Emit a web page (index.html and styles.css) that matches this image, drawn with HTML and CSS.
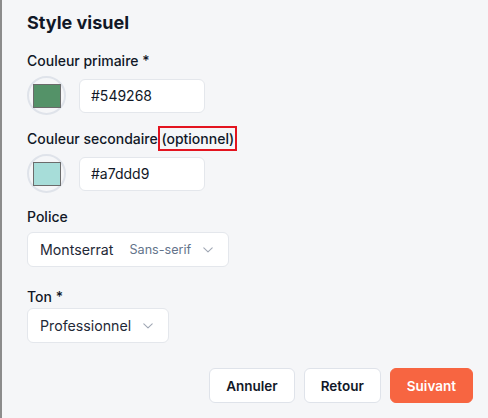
FILE: index.html
```html
<!DOCTYPE html>
<html lang="fr">
<head>
    <meta charset="UTF-8">
    <meta name="viewport" content="width=device-width, initial-scale=1.0">
    <title>Style visuel</title>
    <link rel="stylesheet" href="styles.css">
</head>
<body>
    <div class="panel">
        <h2 class="panel-title">Style visuel</h2>

        <div class="field">
            <label class="field-label">Couleur primaire *</label>
            <div class="color-row">
                <div class="swatch"><span class="swatch-fill" style="background: #549268"></span></div>
                <input class="text-input" type="text" value="#549268">
            </div>
        </div>

        <div class="field">
            <label class="field-label">Couleur secondaire <span class="optional">(optionnel)</span></label>
            <div class="color-row">
                <div class="swatch"><span class="swatch-fill" style="background: #a7ddd9"></span></div>
                <input class="text-input" type="text" value="#a7ddd9">
            </div>
        </div>

        <div class="field field-wide">
            <label class="field-label">Police</label>
            <div class="select">
                <span class="select-value">Montserrat</span>
                <span class="select-hint">Sans-serif</span>
                <svg class="chevron" width="10" height="6" viewBox="0 0 10 6"><path d="M0.8 0.8L5 4.8 9.2 0.8" fill="none" stroke="#a0a7b4" stroke-width="1.1" stroke-linecap="round" stroke-linejoin="round"/></svg>
            </div>
        </div>

        <div class="field field-tight">
            <label class="field-label">Ton *</label>
            <div class="select">
                <span class="select-value">Professionnel</span>
                <svg class="chevron" width="10" height="6" viewBox="0 0 10 6"><path d="M0.8 0.8L5 4.8 9.2 0.8" fill="none" stroke="#a0a7b4" stroke-width="1.1" stroke-linecap="round" stroke-linejoin="round"/></svg>
            </div>
        </div>

        <div class="actions">
            <button class="btn">Annuler</button>
            <button class="btn">Retour</button>
            <button class="btn btn-primary">Suivant</button>
        </div>
    </div>
</body>
</html>
```

FILE: styles.css
```css
html, body {
    margin: 0;
    height: 100%;
}

body {
    font-family: Inter, "Noto Sans", sans-serif;
    background: #f5f6f8;
    color: #111827;
}

.panel {
    min-height: 100%;
    box-sizing: border-box;
    border-left: 2px solid #8c8c8c;
    padding: 12px 15px 0 25px;
}

.panel-title {
    margin: 0 0 17px;
    font-size: 18px;
    line-height: 22px;
    font-weight: 700;
}

.field {
    margin-bottom: 14px;
}

.field-label {
    display: block;
    font-size: 14px;
    line-height: 20px;
    font-weight: 500;
    margin-bottom: 5px;
}

/* highlighted hint next to the label */
.optional {
    border: 2px solid #e3141f;
    padding: 2px 1px;
    margin-left: -3px;
}

.color-row {
    display: flex;
    align-items: center;
    gap: 13px;
}

.swatch {
    width: 39px;
    height: 39px;
    box-sizing: border-box;
    border: 2px solid #dfe3ea;
    border-radius: 50%;
    display: flex;
    align-items: center;
    justify-content: center;
}

.swatch-fill {
    width: 26px;
    height: 22px;
    border: 1px solid #6b6b6b;
}

.text-input {
    width: 126px;
    height: 34px;
    box-sizing: border-box;
    padding: 0 11px;
    border: 1px solid #e4e7ec;
    border-radius: 6px;
    background: #fff;
    font-family: inherit;
    font-size: 14px;
    color: #111827;
}

.select {
    display: inline-flex;
    align-items: center;
    height: 35px;
    box-sizing: border-box;
    padding: 0 15px 0 12px;
    border: 1px solid #e4e7ec;
    border-radius: 6px;
    background: #fff;
}

.select-value {
    font-size: 14.2px;
    color: #1f2937;
}

.select-hint {
    margin-left: 16px;
    font-size: 12.6px;
    color: #64748b;
}

.chevron {
    margin-left: 12px;
}

.field-wide {
    margin-bottom: 20px;
}

.field-tight .field-label {
    margin-bottom: 1px;
}

.actions {
    display: flex;
    justify-content: flex-end;
    gap: 9px;
    margin-top: 25px;
}

.btn {
    height: 35px;
    padding: 0 16px;
    border: 1px solid #dfe3ea;
    border-radius: 6px;
    background: #fff;
    font-family: inherit;
    font-size: 13.5px;
    font-weight: 600;
    color: #111827;
}

.btn-primary {
    background: #f76541;
    border-color: #f76541;
    color: #fff;
}
```
